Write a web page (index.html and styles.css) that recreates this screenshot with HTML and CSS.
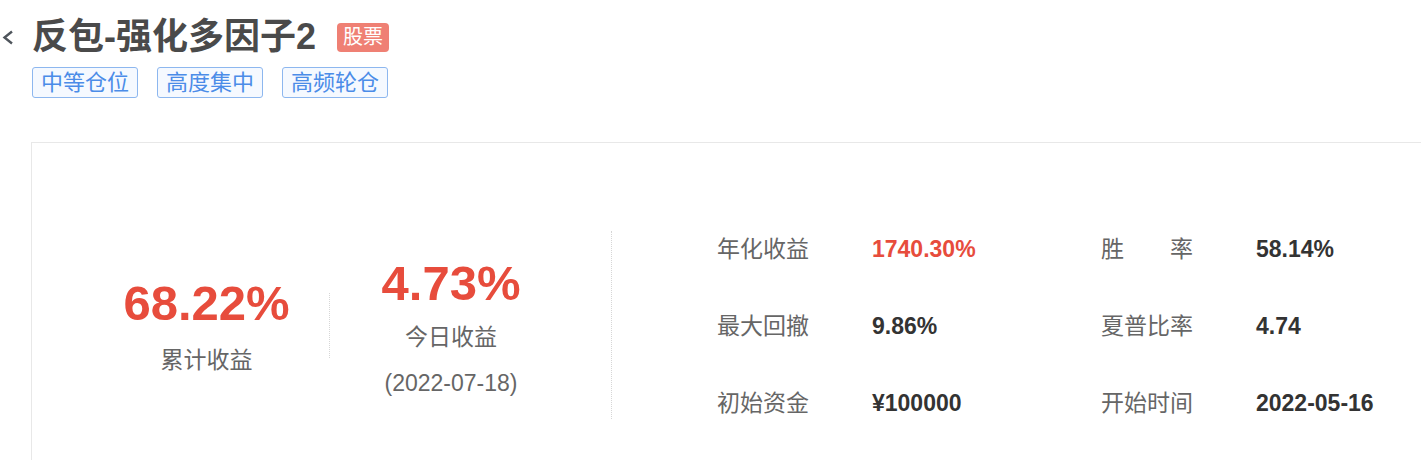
FILE: index.html
```html
<!DOCTYPE html>
<html>
<head>
    <title>反包-强化多因子2</title>
    <link rel="stylesheet" href="styles.css">
</head>
<body>
    <div class="header">
        <a class="back" href="#">
            <svg width="14" height="17" viewBox="0 0 14 17">
                <polyline points="11,2.5 3.5,8.5 11,14.5" fill="none" stroke="#4f555c" stroke-width="2.4"/>
            </svg>
        </a>
        <div class="info">
            <div class="title-row">
                <h1>反包-强化多因子2</h1>
                <span class="badge">股票</span>
            </div>
            <div class="tags">
                <span class="tag">中等仓位</span>
                <span class="tag">高度集中</span>
                <span class="tag">高频轮仓</span>
            </div>
        </div>
    </div>

    <div class="card">
        <div class="summary">
            <div class="summary-item total">
                <div class="big-num">68.22%</div>
                <div class="summary-label">累计收益</div>
            </div>
            <div class="sep"></div>
            <div class="summary-item today">
                <div class="big-num">4.73%</div>
                <div class="summary-label">今日收益</div>
                <div class="summary-date">(2022-07-18)</div>
            </div>
        </div>
        <div class="metrics">
            <span class="m-label">年化收益</span>
            <span class="m-value up">1740.30%</span>
            <span class="m-label spread"><i>胜</i><i>率</i></span>
            <span class="m-value">58.14%</span>

            <span class="m-label">最大回撤</span>
            <span class="m-value">9.86%</span>
            <span class="m-label">夏普比率</span>
            <span class="m-value">4.74</span>

            <span class="m-label">初始资金</span>
            <span class="m-value">¥100000</span>
            <span class="m-label">开始时间</span>
            <span class="m-value">2022-05-16</span>
        </div>
    </div>
</body>
</html>
```

FILE: styles.css
```css
html, body {
    overflow: hidden;
}
body {
    margin: 0;
    background-color: #fff;
    font-family: "Liberation Sans", "Noto Sans CJK SC", sans-serif;
    color: #333;
}
.header {
    display: flex;
    padding-top: 15px;
}
.back {
    width: 32px;
    height: 44px;
    padding: 14px 0 0 1px;
    box-sizing: border-box;
}
.back svg {
    display: block;
}
.title-row {
    display: flex;
    align-items: center;
    height: 44px;
}
h1 {
    margin: 0;
    font-size: 36px;
    line-height: 44px;
    font-weight: bold;
    color: #4a4a4a;
}
.badge {
    margin-left: 21px;
    background-color: #ef8074;
    color: #fff;
    font-size: 20px;
    line-height: 29px;
    height: 29px;
    padding: 0 6px;
    border-radius: 4px;
}
.tags {
    display: flex;
    gap: 19px;
    margin-top: 8px;
}
.tag {
    font-size: 22px;
    line-height: 29px;
    padding: 0 8px;
    color: #4b8ce8;
    background-color: #f5f9ff;
    border: 1px solid #8db7ef;
    border-radius: 3px;
}
.card {
    margin: 44px -40px 0 31px;
    border: 1px solid #e8e8e8;
    padding-top: 88px;
    height: 400px;
    display: flex;
    align-items: flex-start;
}
.summary {
    display: flex;
    align-items: center;
    height: 188px;
    padding: 0 39px 0 52px;
    border-right: 1px dotted #d6d6d6;
}
.summary-item {
    display: flex;
    flex-direction: column;
    align-items: center;
}
.summary-item.total {
    width: 245px;
    padding-top: 4px;
}
.summary-item.today {
    width: 242px;
    padding-top: 6px;
}
.sep {
    width: 0;
    height: 65px;
    border-left: 1px dotted #d6d6d6;
}
.big-num {
    font-size: 49px;
    line-height: 50px;
    font-weight: bold;
    color: #e74c3c;
}
.summary-label {
    font-size: 23px;
    line-height: 32px;
    color: #666;
    margin-top: 16px;
}
.today .summary-label {
    margin-top: 13px;
}
.summary-date {
    font-size: 23px;
    line-height: 32px;
    color: #666;
    margin-top: 14px;
}
.metrics {
    flex: 1;
    padding-left: 105px;
    display: grid;
    grid-template-columns: 155px 229px 155px auto;
    grid-template-rows: repeat(3, 36px);
    row-gap: 41px;
    align-items: center;
}
.m-label {
    font-size: 23px;
    line-height: 36px;
    color: #666;
    width: 92px;
}
.m-label.spread {
    display: flex;
    justify-content: space-between;
}
.m-label i {
    font-style: normal;
}
.m-value {
    font-size: 23px;
    line-height: 36px;
    font-weight: bold;
    color: #333;
}
.m-value.up {
    color: #e74c3c;
}
```
